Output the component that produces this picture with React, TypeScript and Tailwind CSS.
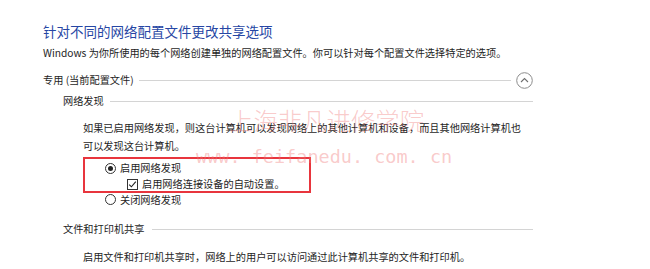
export default function App() {
  return (
    <div
      className="relative w-[650px] h-[269px] overflow-hidden bg-white text-[#1e1e1e] text-[10.2px]"
      style={{ fontFamily: '"Noto Sans CJK SC", "Noto Sans", sans-serif' }}
    >
      <div className="flex flex-col pt-[22px] pl-[43px] w-[533px]">
        <div className="h-[18px] flex items-center text-[13.5px] text-[#2646a4]">
          针对不同的网络配置文件更改共享选项
        </div>
        <div className="mt-[4px] h-[18px] flex items-center">
          Windows 为你所使用的每个网络创建单独的网络配置文件。你可以针对每个配置文件选择特定的选项。
        </div>

        <div className="mt-[9px] h-[18px] flex items-center">
          <span>专用 (当前配置文件)</span>
          <div className="flex-1 h-px bg-[#d4d4d4] ml-[5px] mr-[5px]" />
          <svg width="17" height="17" viewBox="0 0 17 17" className="shrink-0">
            <circle cx="8.5" cy="8.5" r="7.8" fill="none" stroke="#8c8c8c" strokeWidth="1" />
            <path d="M5 10 L8.5 6.5 L12 10" fill="none" stroke="#6e6e6e" strokeWidth="1.1" />
          </svg>
        </div>

        <div className="mt-[3px] h-[18px] flex items-center pl-[20px]">
          <span>网络发现</span>
          <div className="flex-1 h-px bg-[#d4d4d4] ml-[6px]" />
        </div>

        <div className="mt-[9px] pl-[40px] leading-[18px]">
          <div>如果已启用网络发现，则这台计算机可以发现网络上的其他计算机和设备，而且其他网络计算机也</div>
          <div>可以发现这台计算机。</div>
        </div>

        <div className="mt-[5px] pl-[62px] flex flex-col">
          <div className="h-[16px] flex items-center gap-[4px]">
            <span className="w-[11px] h-[11px] rounded-full border border-[#333] flex items-center justify-center">
              <span className="w-[5px] h-[5px] rounded-full bg-[#222]" />
            </span>
            <span>启用网络发现</span>
          </div>
          <div className="h-[16px] flex items-center gap-[4px] pl-[22px]">
            <svg width="11" height="11" viewBox="0 0 11 11">
              <rect x="0.5" y="0.5" width="10" height="10" fill="#fff" stroke="#333" />
              <path d="M2.2 5.6 L4.4 7.8 L8.8 2.6" fill="none" stroke="#222" strokeWidth="1.1" />
            </svg>
            <span>启用网络连接设备的自动设置。</span>
          </div>
          <div className="h-[15px] flex items-center gap-[4px]">
            <span className="w-[11px] h-[11px] rounded-full border border-[#333]" />
            <span>关闭网络发现</span>
          </div>
        </div>

        <div className="mt-[13px] h-[18px] flex items-center pl-[20px]">
          <span>文件和打印机共享</span>
          <div className="flex-1 h-px bg-[#d4d4d4] ml-[7px]" />
        </div>

        <div className="mt-[10px] h-[18px] flex items-center pl-[40px]">
          启用文件和打印机共享时，网络上的用户可以访问通过此计算机共享的文件和打印机。
        </div>
      </div>

      {/* red annotation box */}
      <div className="absolute left-[83px] top-[157px] w-[228px] h-[36px] border-2 border-[#e8353d] pointer-events-none" />

      {/* watermark */}
      <div className="absolute left-[229px] top-[105px] text-[24.4px] leading-[30px] font-light text-[#f07878]/40 pointer-events-none whitespace-nowrap">
        上海非凡进修学院
      </div>
      <div
        className="absolute left-[196px] top-[145px] text-[18.5px] leading-[24px] text-[#f07878]/40 pointer-events-none whitespace-nowrap"
        style={{ fontFamily: '"DejaVu Sans Mono", monospace' }}
      >
        www. feifanedu. com. cn
      </div>
    </div>
  );
}
